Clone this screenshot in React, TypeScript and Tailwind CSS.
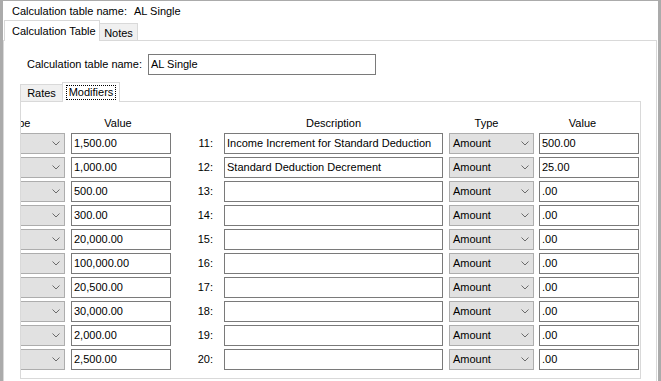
import React from "react";

const rows: [string, string, string][] = [
    ["1,500.00", "Income Increment for Standard Deduction", "500.00"],
    ["1,000.00", "Standard Deduction Decrement", "25.00"],
    ["500.00", "", ".00"],
    ["300.00", "", ".00"],
    ["20,000.00", "", ".00"],
    ["100,000.00", "", ".00"],
    ["20,500.00", "", ".00"],
    ["30,000.00", "", ".00"],
    ["2,000.00", "", ".00"],
    ["2,500.00", "", ".00"],
];

function Chevron() {
    return (
        <svg width="8" height="5" viewBox="0 0 8 5" className="shrink-0">
            <path d="M0.5 0.5 L4 4 L7.5 0.5" fill="none" stroke="#6b6b6b" strokeWidth="1" />
        </svg>
    );
}

function Combo({ text }: { text?: string }) {
    return (
        <div className="w-[85px] h-[21px] shrink-0 flex items-center justify-between pl-[3px] pr-[4px] bg-[#e1e1e1] border border-[#adadad]">
            <span>{text}</span>
            <Chevron />
        </div>
    );
}

function Field({ value, w }: { value: string; w: string }) {
    return (
        <div className={`${w} h-[21px] shrink-0 flex items-center pl-[2px] bg-white border border-[#7a7a7a] whitespace-nowrap overflow-hidden`}>
            {value}
        </div>
    );
}

export default function App() {
    return (
        <div
            className="w-[661px] h-[381px] overflow-hidden bg-white border-t border-l-[3px] border-r-[3px] border-[#ababab] flex flex-col text-[11px] text-black"
            style={{ fontFamily: '"Liberation Sans", Arial, sans-serif' }}
        >
            <div className="h-[20px] shrink-0 flex items-center pl-[9px] pt-[1px]">
                <span className="w-[122px]">Calculation table name:</span>
                <span>AL Single</span>
            </div>

            <div className="h-[20px] shrink-0 flex items-end pl-[1px] relative z-10 -mb-px">
                <div className="h-[21px] w-[96px] flex items-center pl-[7px] bg-white border border-b-0 border-[#d9d9d9]">
                    Calculation Table
                </div>
                <div className="h-[18px] w-[38px] flex items-center justify-center bg-[#f0f0f0] border border-l-0 border-[#d9d9d9] pt-[2px]">
                    Notes
                </div>
            </div>

            <div className="flex-1 border-t border-l border-r border-[#d9d9d9] mr-[1px] flex flex-col pt-[13px]">
                <div className="flex items-center pl-[23px] h-[21px]">
                    <span className="w-[121px]">Calculation table name:</span>
                    <Field value="AL Single" w="w-[228px]" />
                </div>

                <div className="h-[20px] mt-[7px] flex items-end pl-[16px] relative z-10 -mb-px">
                    <div className="h-[18px] w-[42px] flex items-center justify-center bg-[#f0f0f0] border border-r-0 border-[#d9d9d9] pt-[1px]">
                        Rates
                    </div>
                    <div className="h-[20px] w-[58px] flex items-center justify-center bg-white border border-b-0 border-[#d9d9d9]">
                        <span className="px-[2px] border border-dotted border-black leading-[13px]">Modifiers</span>
                    </div>
                </div>

                <div className="ml-[16px] w-[621px] h-[278px] shrink-0 border border-[#d9d9d9] overflow-hidden pt-[14px]">
                    <div className="ml-[-41px] flex flex-col gap-[3px]">
                        <div className="flex h-[14px] items-center">
                            <div className="w-[85px] shrink-0 text-center pr-[8px]">Type</div>
                            <div className="w-[100px] shrink-0 ml-[6px] text-center pr-[6px]">Value</div>
                            <div className="w-[42px] shrink-0" />
                            <div className="w-[219px] shrink-0 ml-[11px] text-center">Description</div>
                            <div className="w-[85px] shrink-0 ml-[6px] text-center pr-[10px]">Type</div>
                            <div className="w-[100px] shrink-0 ml-[5px] text-center pr-[13px]">Value</div>
                        </div>
                        {rows.map((r, i) => (
                            <div key={i} className="flex items-center">
                                <Combo />
                                <div className="ml-[6px] shrink-0">
                                    <Field value={r[0]} w="w-[100px]" />
                                </div>
                                <div className="w-[42px] shrink-0 text-right">{i + 11}:</div>
                                <div className="ml-[11px] shrink-0">
                                    <Field value={r[1]} w="w-[219px]" />
                                </div>
                                <div className="ml-[6px] shrink-0">
                                    <Combo text="Amount" />
                                </div>
                                <div className="ml-[5px] shrink-0">
                                    <Field value={r[2]} w="w-[100px]" />
                                </div>
                            </div>
                        ))}
                    </div>
                </div>
            </div>
        </div>
    );
}
